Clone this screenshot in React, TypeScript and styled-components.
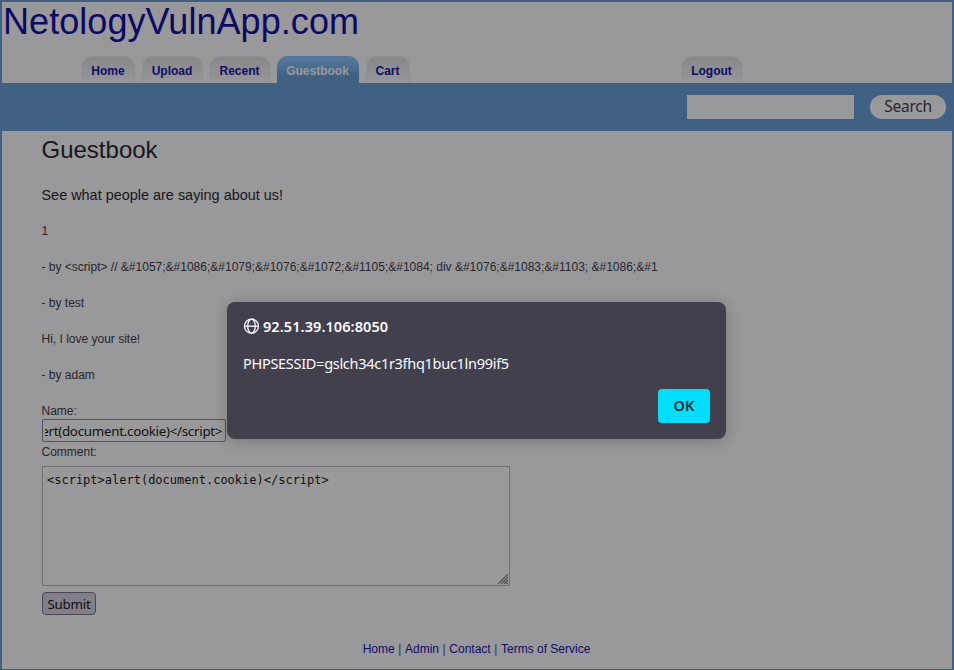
import React from "react";
import styled, { createGlobalStyle, css } from "styled-components";

const GlobalStyle = createGlobalStyle`
  * { box-sizing: border-box; }
  body { margin: 0; background: #99989a; overflow: hidden; }
`;

const Page = styled.div`
  position: relative;
  width: 954px;
  height: 670px;
  border: 2px solid #406083;
  border-bottom-width: 1px;
  background: #99989a;
  color: #28272c;
  font: 12px/18px "Liberation Sans", Arial, sans-serif;
  overflow: hidden;
`;

const Title = styled.h1`
  margin: 0;
  padding-left: 1px;
  height: 54px;
  font-size: 36px;
  line-height: 40px;
  font-weight: 400;
  color: #0b0964;
  letter-spacing: 0.06px;
`;

const Tabs = styled.nav`
  display: flex;
  gap: 7px;
  height: 27px;
  padding-left: 80px;
`;

const Tab = styled.a<{ $w: number; $active?: boolean; $offset?: number }>`
  width: ${(p) => p.$w}px;
  margin-left: ${(p) => p.$offset ?? 0}px;
  border: 1px solid #8e8d90;
  border-bottom: 0;
  border-radius: 11px 11px 0 0;
  background: linear-gradient(#878689, #98979a);
  color: #100c68;
  font-weight: 700;
  line-height: 29px;
  text-align: center;
  text-indent: -1px;
  white-space: nowrap;
  ${(p) =>
    p.$active &&
    css`
      border-color: #507498;
      border-width: 1px 0 0;
      background: linear-gradient(#587a9e, #406083 75%);
      color: #99989a;
    `}
`;

const SearchBar = styled.div`
  display: flex;
  justify-content: flex-end;
  align-items: center;
  gap: 16px;
  height: 48px;
  padding-right: 6px;
  background: #406083;
`;

const SearchInput = styled.input`
  width: 167px;
  height: 24px;
  border: 0;
  background: #99989a;
`;

const SearchButton = styled.button`
  width: 76px;
  height: 24px;
  padding: 0 0 2px;
  border: 0;
  border-radius: 12px;
  background: #99989a;
  color: #28272c;
  font: 15.5px/22px "Noto Sans", sans-serif;
  letter-spacing: -0.25px;
`;

const Content = styled.main`
  display: flex;
  flex-direction: column;
  align-items: flex-start;
  height: 506px;
  padding-left: 40px;
  text-indent: -0.5px;
`;

const Heading = styled.h2`
  margin: 0 0 17px;
  font-size: 24px;
  line-height: 38px;
  font-weight: 400;
  color: #17161a;
`;

const Lead = styled.h4`
  margin: 0 0 18px;
  font-size: 14.4px;
  line-height: 18px;
  font-weight: 400;
  color: #17161a;
  letter-spacing: 0.02px;
`;

const Entry = styled.p`
  margin: 0 0 18px;
`;

const NameInput = styled.input`
  width: 184px;
  height: 23px;
  margin: -1px 0 1px;
  padding: 0 3px 0 2px;
  border: 1px solid #55535f;
  border-radius: 2px;
  background: #99989a;
  color: #111;
  font: 13.33px "Noto Sans", sans-serif;
  letter-spacing: -0.27px;
`;

const CommentBox = styled.textarea`
  width: 468px;
  height: 120px;
  margin: 5px 0 6px;
  padding: 4px;
  border: 1px solid #707072;
  background: #99989a;
  color: #111;
  font: 12px/18px "DejaVu Sans Mono", monospace;
  resize: none;
`;

const CommentArea = styled.div`
  position: relative;
  display: flex;
`;

const Grip = styled.svg`
  position: absolute;
  right: 2px;
  bottom: 8px;
`;

const Submit = styled.button`
  width: 54px;
  height: 23px;
  padding: 0;
  border: 1px solid #494752;
  border-radius: 4px;
  background: #827f89;
  color: #111;
  font: 13.33px/20px "Noto Sans", sans-serif;
  letter-spacing: -0.25px;
`;

const Footer = styled.footer`
  display: flex;
  justify-content: center;
  gap: 3.6px;
  margin-top: 3px;
  padding-right: 1px;
  color: #333238;
  a { color: #100c68; }
`;

const Dialog = styled.section`
  position: absolute;
  left: 225px;
  top: 300px;
  display: flex;
  flex-direction: column;
  width: 499px;
  height: 137px;
  padding: 15px 16px 16px;
  border-radius: 8px;
  background: #42404d;
  box-shadow: 0 2px 14px rgba(30, 29, 36, 0.25);
  color: #fbfbfe;
  font: 15px/20px "Noto Sans", sans-serif;
`;

const Origin = styled.div`
  display: flex;
  align-items: center;
  gap: 3px;
  height: 18px;
  font-size: 14.5px;
  font-weight: 600;
  letter-spacing: 0.08px;
`;

const Message = styled.div`
  margin-top: 18px;
  font-size: 14.5px;
  letter-spacing: -0.29px;
  white-space: nowrap;
`;

const OkButton = styled.button`
  align-self: flex-end;
  width: 52px;
  height: 34px;
  margin-top: 16px;
  padding: 0 0 2px;
  border: 0;
  border-radius: 4px;
  background: #00ddff;
  color: #2b2a33;
  font: 600 14.5px "Noto Sans", sans-serif;
`;

const tabs = [
  { label: "Home", w: 53 },
  { label: "Upload", w: 61 },
  { label: "Recent", w: 60 },
  { label: "Guestbook", w: 82, active: true },
  { label: "Cart", w: 44 },
  { label: "Logout", w: 60, offset: 265 },
];

const entries = [
  "1",
  "- by <script> // &#1057;&#1086;&#1079;&#1076;&#1072;&#1105;&#1084; div &#1076;&#1083;&#1103; &#1086;&#1",
  "- by test",
  "Hi, I love your site!",
  "- by adam",
];

const links = ["Home", "Admin", "Contact", "Terms of Service"];

export default function App() {
  const nameRef = React.useRef<HTMLInputElement>(null);
  React.useLayoutEffect(() => {
    if (nameRef.current) nameRef.current.scrollLeft = 1000;
  }, []);
  return (
    <Page>
      <GlobalStyle />
      <Title>NetologyVulnApp.com</Title>
      <Tabs>
        {tabs.map((t) => (
          <Tab key={t.label} $w={t.w} $active={t.active} $offset={t.offset}>
            {t.label}
          </Tab>
        ))}
      </Tabs>
      <SearchBar>
        <SearchInput />
        <SearchButton>Search</SearchButton>
      </SearchBar>
      <Content>
        <Heading>Guestbook</Heading>
        <Lead>See what people are saying about us!</Lead>
        {entries.map((e) => (
          <Entry key={e}>{e}</Entry>
        ))}
        <label>Name:</label>
        <NameInput ref={nameRef} defaultValue="<script>alert(document.cookie)</script>" />
        <label>Comment:</label>
        <CommentArea>
          <CommentBox spellCheck={false} defaultValue="<script>alert(document.cookie)</script>" />
          <Grip width="10" height="10" viewBox="0 0 10 10" stroke="#48474b" strokeWidth="1.1">
            <path d="M0 10 10 0M3 10l7-7M6 10l4-4M8.5 10 10 8.5" />
          </Grip>
        </CommentArea>
        <Submit>Submit</Submit>
      </Content>
      <Footer>
        {links.map((l, i) => (
          <React.Fragment key={l}>
            {i > 0 && <span>|</span>}
            <a>{l}</a>
          </React.Fragment>
        ))}
      </Footer>
      <Dialog>
        <Origin>
          <svg width="17" height="16" viewBox="0 0 17 16" fill="none" stroke="#fbfbfe" strokeWidth="1.3">
            <circle cx="8.5" cy="8.2" r="7" />
            <ellipse cx="8.5" cy="8.2" rx="3.8" ry="7" />
            <path d="M1.5 8.2h14" />
          </svg>
          <span>92.51.39.106:8050</span>
        </Origin>
        <Message>PHPSESSID=gslch34c1r3fhq1buc1ln99if5</Message>
        <OkButton>OK</OkButton>
      </Dialog>
    </Page>
  );
}
